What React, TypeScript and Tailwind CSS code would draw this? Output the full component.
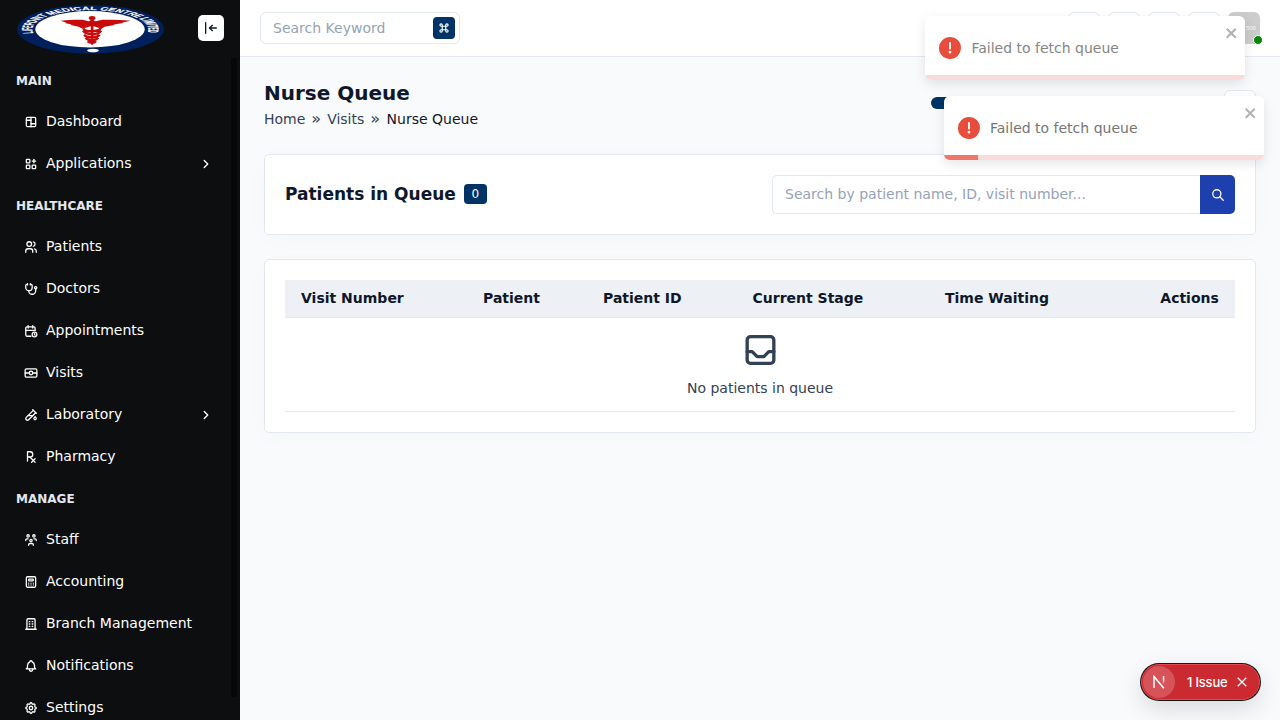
import { type ReactNode } from "react";
import {
  TbLayoutBoard, TbApps, TbUsers, TbStethoscope, TbCalendarTime, TbEPassport, TbTestPipe,
  TbPrescription, TbUsersGroup, TbCalculator, TbBuilding, TbBell, TbSettings, TbInbox,
  TbCommand, TbSearch, TbChevronRight, TbArrowBarToLeft,
} from "react-icons/tb";
import type { IconType } from "react-icons";

type Item = { label: string; icon: IconType; sub?: boolean };
const sections: { title: string; items: Item[] }[] = [
  { title: "MAIN", items: [
    { label: "Dashboard", icon: TbLayoutBoard },
    { label: "Applications", icon: TbApps, sub: true },
  ] },
  { title: "HEALTHCARE", items: [
    { label: "Patients", icon: TbUsers },
    { label: "Doctors", icon: TbStethoscope },
    { label: "Appointments", icon: TbCalendarTime },
    { label: "Visits", icon: TbEPassport },
    { label: "Laboratory", icon: TbTestPipe, sub: true },
    { label: "Pharmacy", icon: TbPrescription },
  ] },
  { title: "MANAGE", items: [
    { label: "Staff", icon: TbUsersGroup },
    { label: "Accounting", icon: TbCalculator },
    { label: "Branch Management", icon: TbBuilding },
    { label: "Notifications", icon: TbBell },
    { label: "Settings", icon: TbSettings },
  ] },
];

function Logo() {
  return (
    <svg className="block h-[52px] w-[150px]" viewBox="0 0 150 52">
      <defs>
        <path id="ring" d="M-37.200 8A38 38 0 1 1 37.200 8" />
      </defs>
      <ellipse cx="74.500" cy="27.200" rx="73.500" ry="24.300" fill="#00205b" />
      <ellipse cx="74" cy="27.300" rx="54.700" ry="18.200" fill="#fff" />
      <g transform="translate(74.300 27.200) scale(1.530 .506)">
        <text fill="#fff" stroke="#fff" strokeWidth=".25" fontFamily="Liberation Sans" fontWeight="bold" fontSize="9.500">
          <textPath href="#ring" textLength="133" lengthAdjust="spacingAndGlyphs">LIFEPOINT MEDICAL CENTRE LIMITED</textPath>
        </text>
      </g>
      <g fill="#c90a0a" stroke="#c90a0a" transform="translate(.6 .7)">
        <path stroke="none" d="M44 18C53 16.800 60 17 66 17L72 18.500L75.500 17L79 18.500L86 17C94 16.800 104 17 114 18L105 20L107 20.300L97 21.800L98 22.300L88 24L85 26L75.500 23L66 26L62 24L54 22.300L55 21.800L48 20.300L50 20Z" />
        <ellipse cx="75.500" cy="15.300" rx="3.400" ry="2" stroke="none" />
        <path d="M74 17h3l-.5 25h-2Z" stroke="none" />
        <path fill="none" strokeWidth="2.500" d="M67 25.500q0 3 8 3t9-3M66.500 28q2 3.500 9 3.500t9-3.500M67.500 32q2 2.500 8 2.500t7.500-2.500M69 35q2 2.500 6.500 2.500t6-2.500M71 38.500q2 1.500 4.500 1.500t4-1.500" />
      </g>
      <ellipse cx="77" cy="48.500" rx="5.800" ry="1.700" fill="#fff" />
    </svg>
  );
}

function Toast({ className, text, bar }: { className: string; text: string; bar?: ReactNode }) {
  return (
    <div className={"absolute flex h-16 w-80 items-center overflow-hidden rounded-md bg-white pl-3.5 shadow-[0_4px_12px_rgba(0,0,0,0.1)] " + className}>
      <svg className="mr-2.5 h-[22px] w-[22px]" viewBox="0 0 24 24" fill="#e74c3c">
        <path d="M11.983 0a12.206 12.206 0 00-8.510 3.653A11.800 11.800 0 000 12.207 11.779 11.779 0 0011.800 24h.214A12.111 12.111 0 0024 11.791 11.766 11.766 0 0011.983 0zM10.500 16.542a1.476 1.476 0 011.449-1.530h.027a1.527 1.527 0 011.523 1.470 1.475 1.475 0 01-1.449 1.530h-.027a1.529 1.529 0 01-1.523-1.470zM11 12.500v-6a1 1 0 012 0v6a1 1 0 11-2 0z" />
      </svg>
      <span className={"text-sm " + text}>Failed to fetch queue</span>
      <svg className="absolute right-1.5 top-[9px] h-4 w-3.5" viewBox="0 0 14 16" fill="#b2b2b2">
        <path fillRule="evenodd" d="M7.710 8.230l3.750 3.750-1.480 1.480-3.750-3.750-3.750 3.750L1 11.980l3.750-3.750L1 4.480 2.480 3l3.750 3.750L9.980 3l1.480 1.480-3.750 3.750z" />
      </svg>
      <div className="absolute bottom-0 left-0 h-[5px] w-full bg-[#fadbd8]">{bar}</div>
    </div>
  );
}

export default function App() {
  return (
    <div className="relative flex h-[720px] w-[1280px] overflow-hidden bg-[#f9fafc] font-['DejaVu_Sans',sans-serif] text-sm text-[#0f172a]">
      <aside className="relative h-full w-60 shrink-0 overflow-hidden bg-[#0c0e0f] text-white">
        <div className="mb-[3px] flex h-14 items-center pl-4">
          <Logo />
          <div className="ml-8 flex h-[26px] w-[26px] items-center justify-center rounded-[5px] bg-white text-[#0f172a]">
            <TbArrowBarToLeft size={16} />
          </div>
        </div>
        {sections.map((s) => (
          <div key={s.title}>
            <h6 className="flex h-[41px] items-center px-4 pt-[3px] text-xs font-bold text-[#e2e8f0]">{s.title}</h6>
            <ul>
              {s.items.map(({ label, icon: Icon, sub }) => (
                <li key={label} className="flex h-[42px] items-center pl-6 pr-[27px]">
                  <Icon size={14} className="mr-2 mt-px shrink-0 [stroke-width:2.2]" />
                  <span className="-mt-px">{label}</span>
                  {sub && <TbChevronRight size={14} className="ml-auto mt-0.5 [stroke-width:2.4]" />}
                </li>
              ))}
            </ul>
          </div>
        ))}
        <div className="absolute right-[3px] top-[58px] h-[639px] w-1.5 rounded-full bg-[#060707]" />
      </aside>

      <div className="flex min-w-0 grow flex-col">
        <header className="flex h-[57px] shrink-0 items-center justify-between border-b border-[#e2e8f0] bg-white px-5">
          <div className="flex h-8 w-[200px] items-center justify-between rounded-md border border-[#e2e8f0] pl-3 pr-1">
            <span className="text-[#94a3b8]">Search Keyword</span>
            <span className="flex h-[22px] w-[22px] items-center justify-center rounded bg-[#003366] text-white"><TbCommand size={14} /></span>
          </div>
          <div className="flex gap-2">
            {[0, 1, 2, 3].map((n) => <div key={n} className="h-8 w-8 rounded-md border border-[#e2e8f0]" />)}
            <div className="relative flex h-8 w-8 items-center justify-end rounded-md bg-[#cccccc] pr-1 font-['Open_Sans',sans-serif] text-[6px] text-white">
              300
              <i className="absolute -bottom-px -right-[3px] h-2.5 w-2.5 rounded-full border-[1.5px] border-white bg-[#0a870a]" />
            </div>
          </div>
        </header>

        <main className="px-6 pt-[22px]">
          <div className="flex h-[75px] justify-between">
            <div>
              <h4 className="text-xl font-bold leading-7">Nurse Queue</h4>
              <div className="mt-0.5 flex leading-5 text-[#334155]">
                <span>Home</span><span className="mx-[6px] text-base leading-5">»</span><span>Visits</span><span className="ml-[6px] mr-[6.500px] text-base leading-5">»</span><span className="text-[#0f172a]">Nurse Queue</span>
              </div>
            </div>
            <div className="flex w-[325px] justify-between">
              <div className="mt-[18px] h-3 w-7 rounded-full bg-[#003366]" />
              <div className="mt-[11px] h-8 w-8 rounded-md border border-[#e2e8f0] bg-white" />
            </div>
          </div>

          <section className="flex h-[81px] items-center justify-between rounded-[5px] border border-[#e2e8f0] bg-white px-5 shadow-[0_4px_24px_rgba(15,23,42,0.02)]">
            <h5 className="flex items-center text-[17px] font-bold">Patients in Queue
              <span className="mb-0.5 ml-2 flex h-5 w-[23px] items-center justify-center rounded bg-[#003366] text-xs font-normal text-white">0</span>
            </h5>
            <div className="flex h-[39px] w-[463px]">
              <div className="flex grow items-center rounded-l-[5px] border border-r-0 border-[#e2e8f0] px-3 pb-0.5 text-[#94a3b8]">Search by patient name, ID, visit number...</div>
              <div className="flex w-[35px] items-center justify-center rounded-r-[5px] bg-[#1e40af] text-white"><TbSearch size={14} className="[stroke-width:2.2]" /></div>
            </div>
          </section>

          <section className="mt-6 h-[174px] rounded-[5px] border border-[#e2e8f0] bg-white p-5 shadow-[0_4px_24px_rgba(15,23,42,0.02)]">
            <div className="grid h-[38px] grid-cols-[182px_120px_149.500px_192.500px_215.300px_1fr] items-center border-b border-[#e2e8f0] bg-[#edf1f5] px-4 pb-px font-bold">
              <span>Visit Number</span><span>Patient</span><span>Patient ID</span><span>Current Stage</span><span>Time Waiting</span><span>Actions</span>
            </div>
            <div className="flex h-[94px] flex-col items-center border-b border-[#e2e8f0] pt-3 text-[#334155]">
              <TbInbox size={40} className="translate-x-[0.5px]" />
              <p className="mt-2 leading-5">No patients in queue</p>
            </div>
          </section>
        </main>
      </div>

      <Toast className="left-[925.400px] top-4" text="text-[#848484]" />
      <Toast className="left-[944px] top-24" text="text-[#757575]" bar={<div className="h-full w-[34px] bg-[#ee7769]" />} />

      <div className="absolute left-[1141px] top-[664px] flex h-9 w-[119px] items-center rounded-full border border-[#e5484d] bg-[#ca2a30] pl-px font-['Inter',sans-serif] text-white shadow-[0_0_0_1px_#171717,0_8px_24px_rgba(0,0,0,0.14)]">
        <div className="flex h-8 w-8 items-center justify-center rounded-full bg-[#d6535a]">
          <svg width="14" height="14" viewBox="0 0 14 14" fill="none" stroke="#fff" strokeWidth="1.500">
            <defs>
              <linearGradient id="fade" x1="0" y1="0" x2="0" y2="1"><stop offset=".4" stopColor="#fff" /><stop offset="1" stopColor="#fff" stopOpacity=".1" /></linearGradient>
            </defs>
            <path d="M2 13V1.500L11.800 13.300" /><path d="M10.800 1h1.500v8h-1.500z" fill="url(#fade)" stroke="none" />
          </svg>
        </div>
        <span className="ml-3 text-[13px] font-medium tracking-[-0.2px]">1 Issue</span>
        <svg className="ml-2.5" width="10" height="10" viewBox="0 0 10 10" stroke="#fff" strokeWidth="1.300"><path d="M.7.700l8.600 8.600M9.300.700l-8.600 8.600" /></svg>
      </div>
    </div>
  );
}
